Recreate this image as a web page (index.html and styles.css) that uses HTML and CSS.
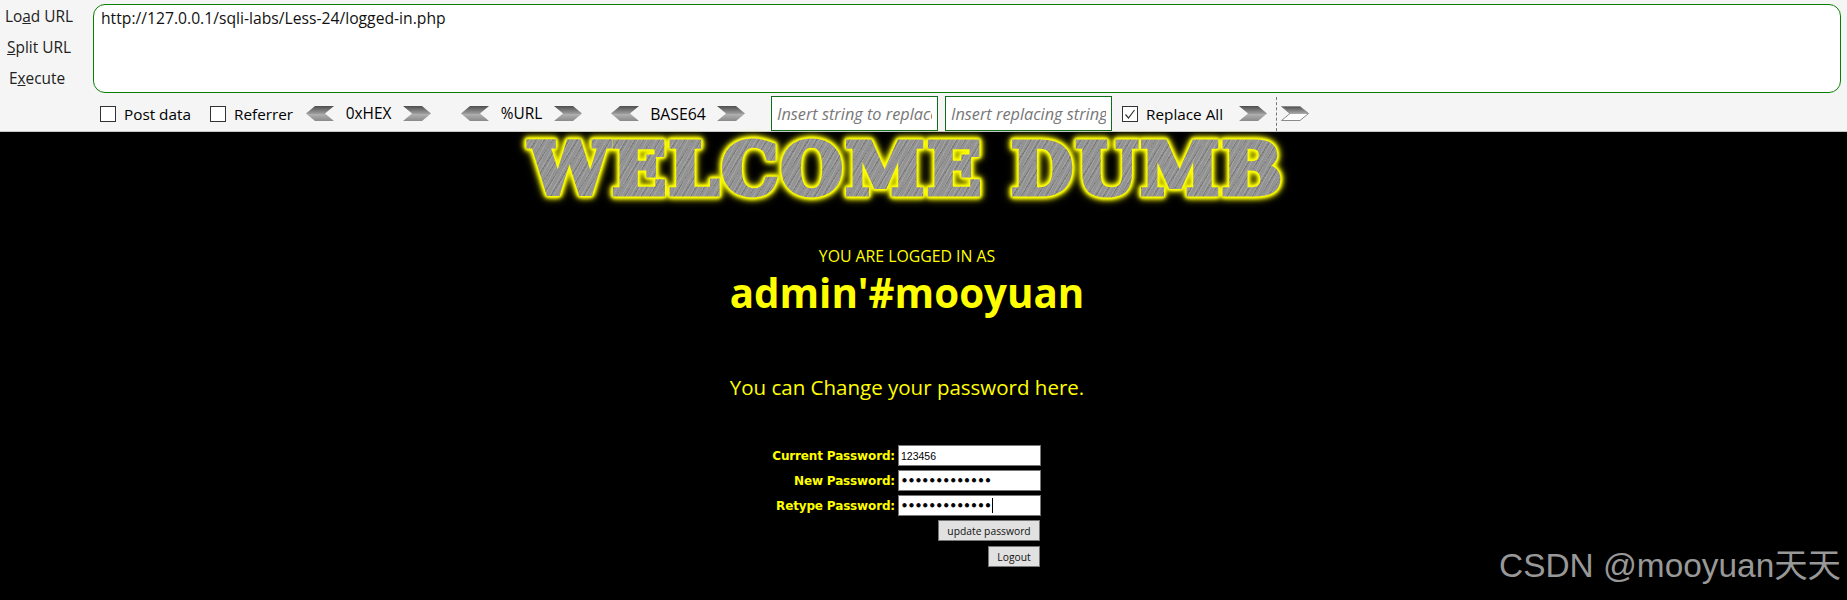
FILE: index.html
```html
<!DOCTYPE html>
<html lang="en">
<head>
  <meta charset="UTF-8" />
  <title>Less-24 logged in</title>
  <link rel="stylesheet" href="styles.css">
</head>
<body>
  <svg class="defs" width="0" height="0">
    <defs>
      <linearGradient id="chev" x1="0" y1="0" x2="0" y2="1">
        <stop offset="0" stop-color="#4e4e4e"/>
        <stop offset="0.5" stop-color="#9a9a9a"/>
        <stop offset="0.55" stop-color="#b0b0b0"/>
        <stop offset="1" stop-color="#8a8a8a"/>
      </linearGradient>
      <linearGradient id="chevHollow" x1="0" y1="0" x2="0" y2="1">
        <stop offset="0" stop-color="#4e4e4e"/>
        <stop offset="0.5" stop-color="#a8a8a8"/>
        <stop offset="0.52" stop-color="#ffffff"/>
        <stop offset="1" stop-color="#ffffff"/>
      </linearGradient>
      <symbol id="chevLeft" viewBox="0 0 28 15"><path d="M0 7.5 9 0H28L19 7.5 28 15H9z" fill="url(#chev)"/></symbol>
      <symbol id="chevRight" viewBox="0 0 28 15"><path d="M0 0H19L28 7.5 19 15H0L9 7.5z" fill="url(#chev)"/></symbol>
    </defs>
  </svg>

  <header class="hackbar">
    <div class="actions">
      <a class="action"><span>Lo<u>a</u>d URL</span></a>
      <a class="action"><span><u>S</u>plit URL</span></a>
      <a class="action action-exec"><span>E<u>x</u>ecute</span></a>
    </div>
    <div class="bar-main">
      <textarea class="url-box" readonly>http://127.0.0.1/sqli-labs/Less-24/logged-in.php</textarea>
      <div class="options">
        <label class="check check-post"><span class="box"></span>Post data</label>
        <label class="check check-ref"><span class="box"></span>Referrer</label>
        <div class="encoder enc-hex">
          <svg class="chev"><use href="#chevLeft"/></svg>
          <span class="enc-name">0xHEX</span>
          <svg class="chev"><use href="#chevRight"/></svg>
        </div>
        <div class="encoder enc-url">
          <svg class="chev"><use href="#chevLeft"/></svg>
          <span class="enc-name">%URL</span>
          <svg class="chev"><use href="#chevRight"/></svg>
        </div>
        <div class="encoder enc-b64">
          <svg class="chev"><use href="#chevLeft"/></svg>
          <span class="enc-name">BASE64</span>
          <svg class="chev"><use href="#chevRight"/></svg>
        </div>
        <input class="replace-input" type="text" placeholder="Insert string to replace" />
        <input class="replace-input" type="text" placeholder="Insert replacing string" />
        <label class="check check-all">
          <span class="box">
            <svg viewBox="0 0 14 14" width="14" height="14"><path d="M2.5 7.5 5.5 11 11.5 3" fill="none" stroke="#333" stroke-width="1.2"/></svg>
          </span>Replace All
        </label>
        <svg class="chev"><use href="#chevRight"/></svg>
        <span class="sep"></span>
        <svg class="chev" viewBox="0 0 28 15"><path d="M0.5 0.5H19L27.5 7.5 19 14.5H0.5L9 7.5z" fill="url(#chevHollow)" stroke="#8a8a8a" stroke-width="1"/></svg>
      </div>
    </div>
  </header>

  <main class="page">
    <div class="banner"><span class="banner-text">WELCOME DUMB</span></div>
    <div class="logged-as">YOU ARE LOGGED IN AS</div>
    <div class="username">admin'#mooyuan</div>
    <div class="change-msg">You can Change your password here.</div>
    <form class="pass-form">
      <label class="pass-label" for="current">Current Password:</label>
      <input class="pass-input" id="current" type="text" value="123456" />
      <label class="pass-label" for="newpass">New Password:</label>
      <input class="pass-input pass-dots" id="newpass" type="password" value="mooyuan123456" />
      <label class="pass-label" for="retype">Retype Password:</label>
      <div class="caret-wrap">
        <input class="pass-input pass-dots" id="retype" type="password" value="mooyuan123456" />
        <span class="caret"></span>
      </div>
      <button class="form-btn btn-update" type="button">update password</button>
      <button class="form-btn btn-logout" type="button">Logout</button>
    </form>
  </main>

  <div class="watermark">CSDN @mooyuan天天</div>
</body>
</html>
```

FILE: styles.css
```css
* {
  margin: 0;
  padding: 0;
  box-sizing: border-box;
}
html, body {
  height: 600px;
  overflow: hidden;
}
body {
  background-color: #000;
  font-family: "Open Sans", "Noto Sans", sans-serif;
  position: relative;
}
.defs {
  position: absolute;
}

/* hackbar */
.hackbar {
  height: 132px;
  display: flex;
  background-color: #f5f5f5;
  border-bottom: 1px solid #c8c8c8;
  color: #000;
  font-size: 15.4px;
}
.actions {
  width: 93px;
  padding-top: 1px;
  display: flex;
  flex-direction: column;
}
.action {
  width: 78px;
  height: 31px;
  display: flex;
  align-items: center;
  justify-content: center;
  color: #222;
}
.action-exec {
  width: 74px;
}
.bar-main {
  flex: 1;
  padding: 4px 6px 0 0;
}
.url-box {
  display: block;
  width: 100%;
  height: 89px;
  padding: 3px 7px;
  border: 1px solid #0a8000;
  border-radius: 12px;
  background: #fff;
  font-family: inherit;
  font-size: 15.7px;
  line-height: 20px;
  color: #111;
  resize: none;
  outline: none;
}
.options {
  height: 38px;
  padding: 3px 0 0 7px;
  display: flex;
  align-items: center;
}
.check {
  display: flex;
  align-items: center;
  gap: 8px;
  font-size: 15.3px;
  flex: none;
}
.box {
  width: 16px;
  height: 16px;
  border: 1px solid #333;
  background: #fff;
  display: flex;
  align-items: center;
  justify-content: center;
}
.check-post { width: 110px; }
.check-ref { width: 96px; }
.check-all {
  width: 117px;
  margin-left: 10px;
}
.encoder {
  display: flex;
  align-items: center;
  font-size: 15.4px;
}
.enc-name {
  text-align: center;
  white-space: nowrap;
}
.enc-hex .enc-name { width: 69px; }
.enc-url { margin-left: 30px; }
.enc-url .enc-name { width: 65px; }
.enc-b64 { margin-left: 29px; }
.enc-b64 .enc-name { width: 78px; font-size: 15.8px; }
.chev {
  width: 28px;
  height: 15px;
  flex: none;
}
.replace-input {
  width: 167px;
  height: 35px;
  padding: 0 5px;
  border: 1px solid #0f6e1a;
  background: #fff;
  font-family: inherit;
  font-size: 16.3px;
  outline: none;
}
.replace-input::placeholder {
  color: #777;
  font-style: italic;
  opacity: 1;
}
.enc-b64 + .replace-input {
  margin-left: 26px;
}
.replace-input + .replace-input {
  margin-left: 7px;
}
.sep {
  width: 0;
  height: 34px;
  margin: 0 4px 0 9px;
  border-left: 1px dashed #777;
}

/* sqli-labs page */
.page {
  width: 1814px;
  color: #ff0;
  text-align: center;
}
.banner {
  height: 74px;
}
.banner-text {
  display: inline-block;
  padding: 0 5px;
  font-family: "DejaVu Serif", "Liberation Serif", serif;
  font-weight: 900;
  font-size: 71px;
  line-height: 74px;
  letter-spacing: 2.8px;
  -webkit-text-stroke: 5px transparent;
  color: transparent;
  background:
    repeating-linear-gradient(118deg, rgba(255,255,255,0.14) 0 1px, transparent 1px 4px),
    repeating-linear-gradient(122deg, rgba(0,0,0,0.16) 0 1px, transparent 1px 7px),
    #939393;
  -webkit-background-clip: text;
  background-clip: text;
  filter: drop-shadow(0 0 1px #ff0) drop-shadow(0 0 1px #ff0) drop-shadow(0 0 1px #ff0) drop-shadow(0 0 2px #ff0) drop-shadow(0 0 3px #cc0);
}
.logged-as {
  margin-top: 40px;
  font-size: 15.8px;
  line-height: 20px;
}
.username {
  font-size: 40.3px;
  font-weight: 700;
  line-height: 54px;
}
.change-msg {
  margin-top: 53px;
  font-size: 20.5px;
  line-height: 28px;
}
.pass-form {
  margin: 44px 0 0 711px;
  display: grid;
  grid-template-columns: 184px 143px;
  column-gap: 3px;
  row-gap: 4px;
  justify-content: start;
  align-items: center;
  text-align: right;
}
.pass-label {
  font-family: "DejaVu Sans", sans-serif;
  font-weight: 700;
  font-size: 12px;
  letter-spacing: -0.15px;
}
.pass-input {
  display: block;
  width: 143px;
  height: 21px;
  padding: 0 2px;
  border: 1px solid #767676;
  background: #fff;
  color: #000;
  font-family: "Liberation Sans", sans-serif;
  font-size: 10.5px;
  outline: none;
}
.pass-dots {
  font-family: "DejaVu Sans", sans-serif;
  font-size: 11.8px;
  -webkit-text-stroke: 0.8px #000;
}
.caret-wrap {
  position: relative;
}
.caret {
  position: absolute;
  left: 94px;
  top: 3px;
  width: 1px;
  height: 15px;
  background: #000;
}
.form-btn {
  grid-column: 2;
  justify-self: end;
  height: 21px;
  margin-right: 1px;
  border: 1px solid #767676;
  background: #e1e1e1;
  color: #111;
  font-family: "Open Sans", sans-serif;
  font-size: 10.3px;
}
.btn-update { width: 102px; }
.btn-logout { width: 52px; margin-top: 1px; }

.watermark {
  position: absolute;
  right: 6px;
  top: 546px;
  font-family: "Liberation Sans", "Noto Sans CJK SC", sans-serif;
  font-size: 33.4px;
  line-height: 40px;
  color: #989898;
  white-space: nowrap;
}
```
